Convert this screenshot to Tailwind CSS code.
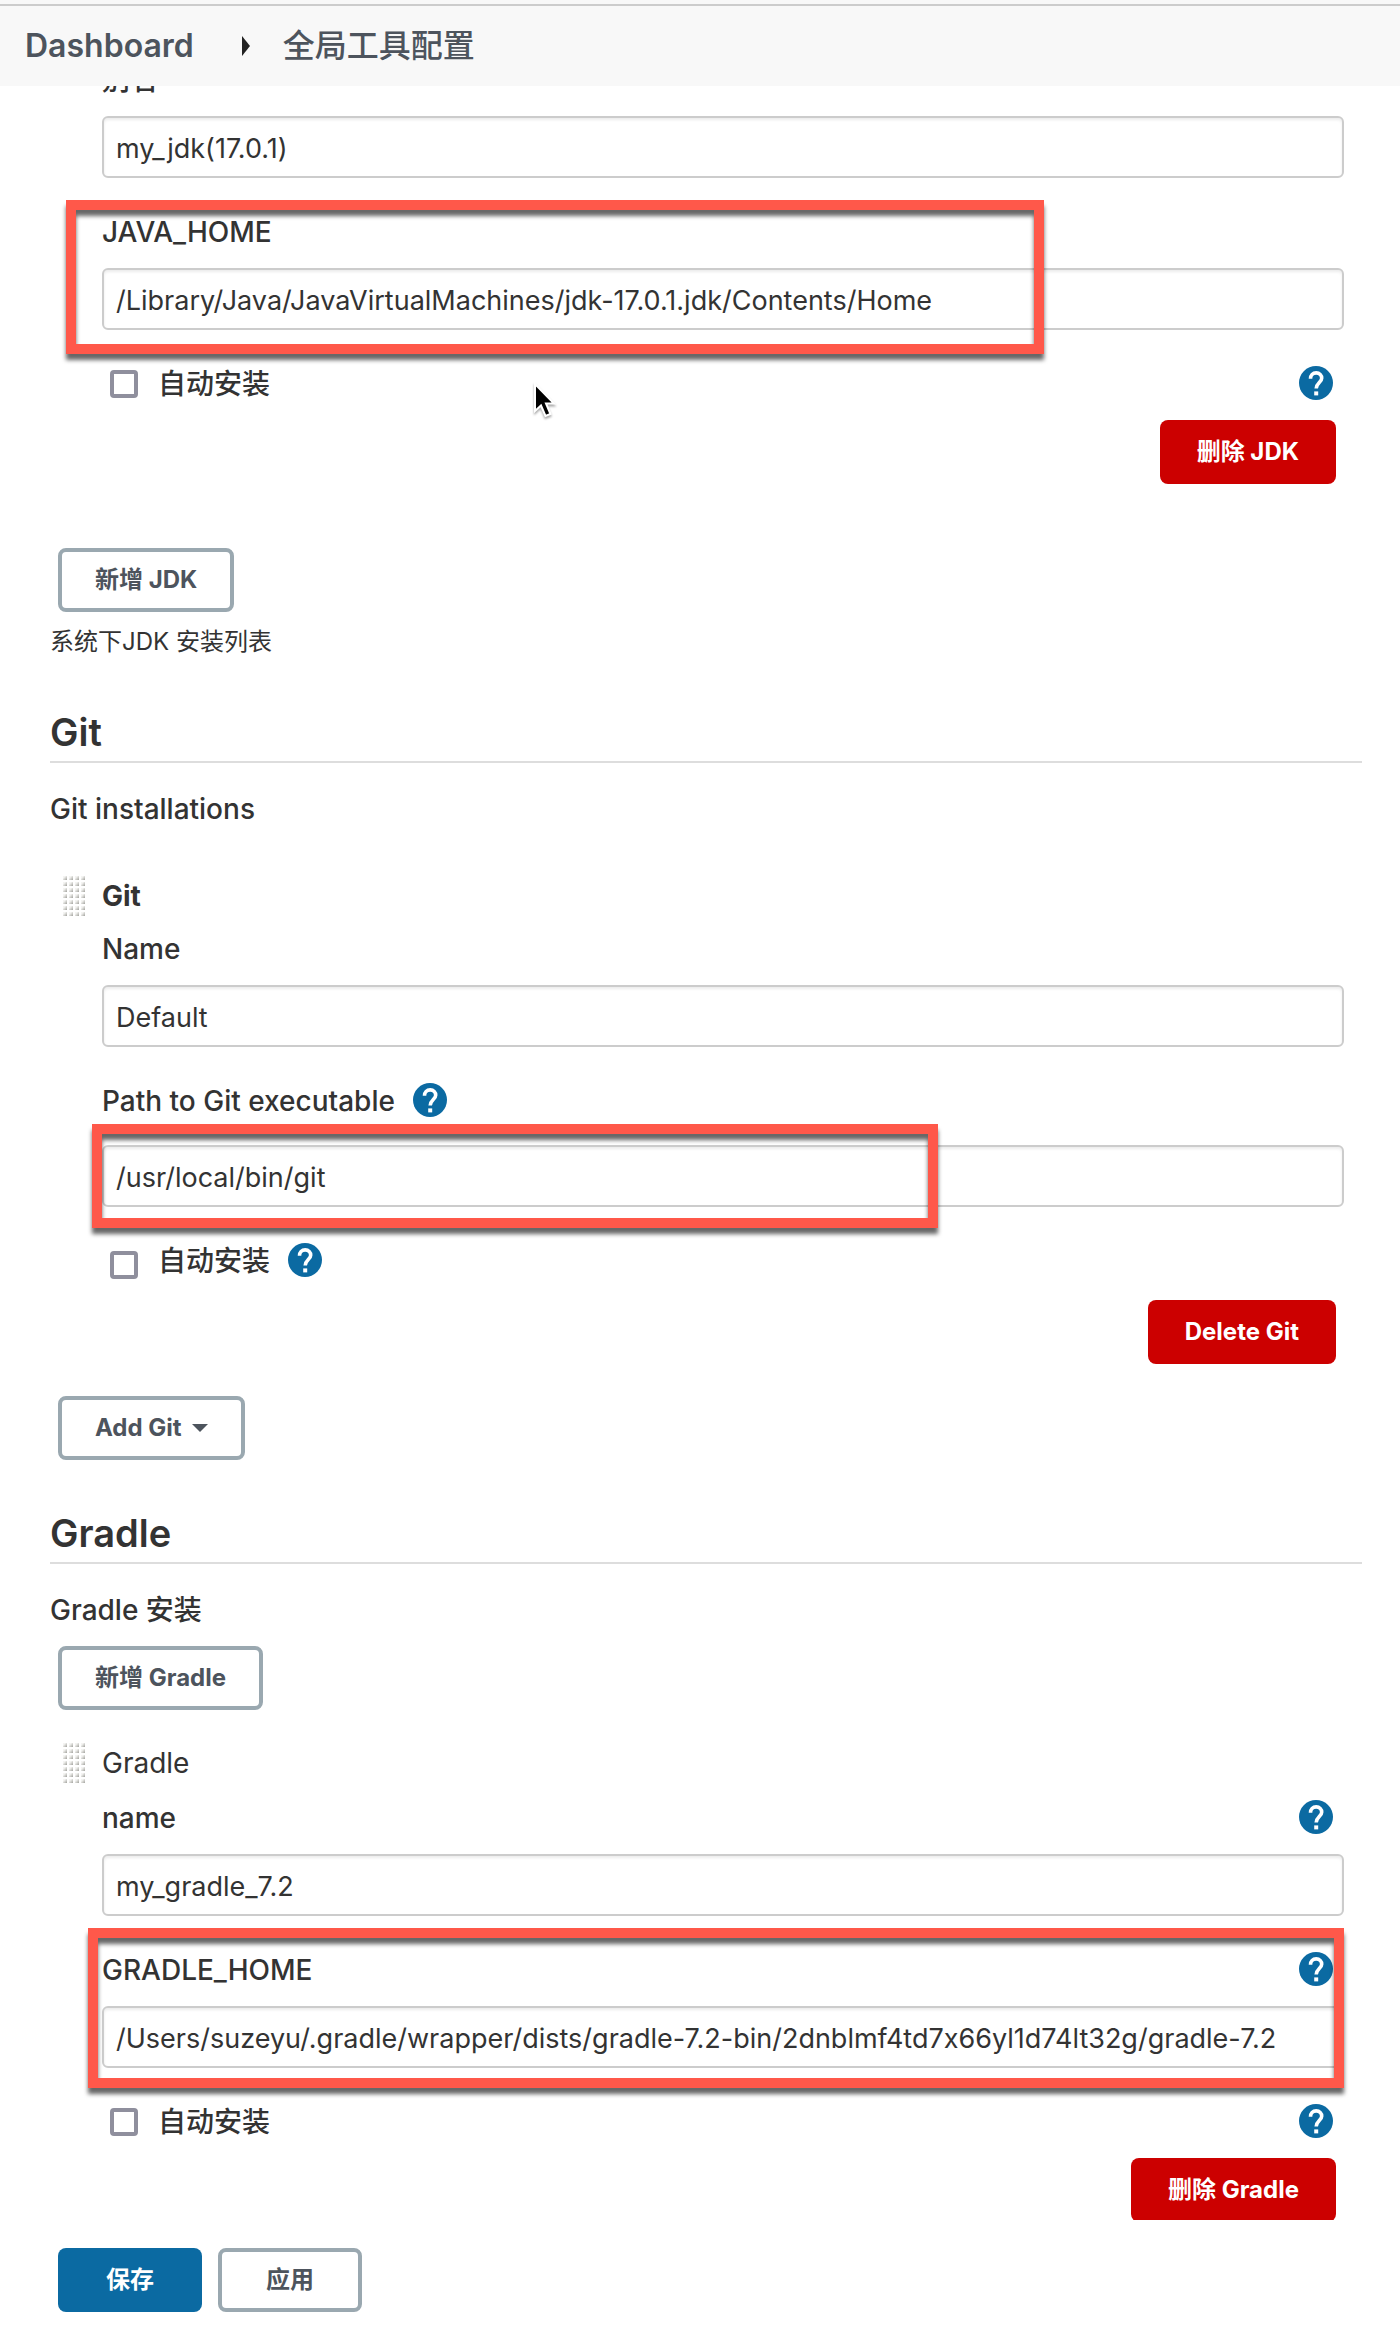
<!DOCTYPE html>
<html lang="zh-CN">
<head>
<meta charset="utf-8">
<title>全局工具配置</title>
<script src="https://cdn.jsdelivr.net/npm/@tailwindcss/browser@4"></script>
</head>
<body class="bg-white text-[28px] leading-9 text-[#333333] font-['Inter','Noto_Sans_CJK_SC',sans-serif] [font-feature-settings:'calt'_0]">

<svg class="absolute size-0" aria-hidden="true">
  <symbol id="help" viewBox="0 0 34 34">
    <circle cx="17" cy="17" r="17" fill="#0b6aa2"/>
    <path d="M11.500 12.700C11.500 9.200 13.800 6.900 17.200 6.900C20.600 6.900 22.700 9.200 22.700 12.200C22.700 16.200 17.200 17 17.200 22.500" fill="none" stroke="#fff" stroke-width="3.600"/>
    <path d="M15.200 25.400h4v4h-4z" fill="#fff"/>
  </symbol>
  <linearGradient id="dot" x1="0" y1="0" x2="1" y2="1">
    <stop offset="0.3" stop-color="#f4f4f2"/><stop offset="1" stop-color="#a0a09b"/>
  </linearGradient>
  <pattern id="dots" width="6" height="6" patternUnits="userSpaceOnUse">
    <rect x="1" y="1" width="4" height="4" fill="url(#dot)"/>
  </pattern>
  <symbol id="grip" viewBox="0 0 24 42"><rect width="24" height="42" fill="url(#dots)"/></symbol>
</svg>

<header class="sticky top-0 z-20 bg-[#f8f8f8] pt-1">
  <nav aria-label="breadcrumb" class="flex h-[82px] items-center border-t-2 border-[#cccccc] pl-[25px] text-[32px] text-[#4d545d]">
    <a href="#" class="font-semibold">Dashboard</a>
    <svg class="ml-12 h-5 w-2" viewBox="0 0 8 20" aria-hidden="true"><path d="M0 0L8 10L0 20Z" fill="#222"/></svg>
    <a href="#" class="ml-[33px] font-medium">全局工具配置</a>
  </nav>
</header>

<form>
<main class="-mt-6 pr-[38px] pl-[50px]">

  <section class="relative">
    <div class="mr-[18px] ml-[52px]">
      <div class="flex flex-col gap-[18px]">
        <label for="jdk-name" class="font-medium">别名</label>
        <input id="jdk-name" type="text" value="my_jdk(17.0.1)" class="h-[62px] w-full rounded-md border-2 border-[#cccccc] px-3 pt-0.5 text-[27px] shadow-[inset_0_2px_3px_rgba(0,0,0,0.08)]">
      </div>
      <div class="relative mt-9 flex flex-col gap-[18px]">
        <label for="java-home" class="font-medium">JAVA_HOME</label>
        <input id="java-home" type="text" value="/Library/Java/JavaVirtualMachines/jdk-17.0.1.jdk/Contents/Home" class="h-[62px] w-full rounded-md border-2 border-[#cccccc] px-3 pt-0.5 text-[27px] shadow-[inset_0_2px_3px_rgba(0,0,0,0.08)]">
        <div class="pointer-events-none absolute -top-3.5 -bottom-6 -left-9 w-[978px] border-10 border-[#ff584a] drop-shadow-[0_6px_2px_rgba(0,0,0,0.6)]"></div>
      </div>
      <div class="mt-9 flex items-center">
        <input id="jdk-auto" type="checkbox" class="ml-2 size-7 appearance-none rounded-sm border-4 border-[#8f8f9d]">
        <label for="jdk-auto" class="ml-5 font-medium">自动安装</label>
        <button type="button" aria-label="帮助" class="mr-[11px] ml-auto self-start"><svg class="size-[34px]"><use href="#help"/></svg></button>
      </div>
      <div class="mt-[18px] mr-2 flex justify-end">
        <button type="button" class="h-16 rounded-lg bg-[#cc0000] px-[37px] text-2xl font-bold text-white">删除 JDK</button>
      </div>
    </div>
    <button type="button" class="mt-16 ml-2 block h-16 rounded-lg border-4 border-[#9aa8b0] px-[33px] text-2xl font-bold text-[#4d545d]">新增 JDK</button>
    <p class="mt-3 text-2xl leading-9">系统下JDK 安装列表</p>
    <svg class="pointer-events-none absolute top-80 left-[483px] h-10 w-7 drop-shadow-[0_2px_1px_rgba(0,0,0,0.35)]" viewBox="0 0 28 40" aria-hidden="true">
      <path d="M2 2V29L8 23.500L12.500 34L17.500 32L13 21.500H21Z" fill="#000" stroke="#fff" stroke-width="2"/>
    </svg>
  </section>

  <section class="mt-12">
    <h2 class="border-b-2 border-[#dddddd] pb-[5px] text-[38px] leading-12 font-semibold">Git</h2>
    <p class="mt-7 font-medium">Git installations</p>
    <div class="mt-12 flex items-center">
      <svg class="ml-3 h-[42px] w-6" aria-hidden="true"><use href="#grip"/></svg>
      <b class="ml-4 font-bold">Git</b>
    </div>
    <div class="mt-3.5 mr-[18px] ml-[52px]">
      <div class="flex flex-col gap-[18px]">
        <label for="git-name" class="font-medium">Name</label>
        <input id="git-name" type="text" value="Default" class="h-[62px] w-full rounded-md border-2 border-[#cccccc] px-3 pt-0.5 text-[27px] shadow-[inset_0_2px_3px_rgba(0,0,0,0.08)]">
      </div>
      <div class="mt-9 flex items-center">
        <label for="git-path" class="font-medium">Path to Git executable</label>
        <button type="button" aria-label="帮助" class="ml-[18px] self-start"><svg class="size-[34px]"><use href="#help"/></svg></button>
      </div>
      <div class="relative mt-[26px]">
        <input id="git-path" type="text" value="/usr/local/bin/git" class="block h-[62px] w-full rounded-md border-2 border-[#cccccc] px-3 pt-0.5 text-[27px] shadow-[inset_0_2px_3px_rgba(0,0,0,0.08)]">
        <div class="pointer-events-none absolute -inset-y-[21px] -left-2.5 w-[846px] border-10 border-[#ff584a] drop-shadow-[0_6px_2px_rgba(0,0,0,0.6)]"></div>
      </div>
      <div class="mt-9 flex items-center">
        <input id="git-auto" type="checkbox" class="ml-2 size-7 self-end appearance-none rounded-sm border-4 border-[#8f8f9d]">
        <label for="git-auto" class="ml-5 font-medium">自动安装</label>
        <button type="button" aria-label="帮助" class="ml-[18px] self-start"><svg class="size-[34px]"><use href="#help"/></svg></button>
      </div>
      <div class="mt-[21px] mr-2 flex justify-end">
        <button type="button" class="h-16 rounded-lg bg-[#cc0000] px-[37px] text-2xl font-bold text-white">Delete Git</button>
      </div>
    </div>
    <button type="button" class="mt-8 ml-2 flex h-16 items-center rounded-lg border-4 border-[#9aa8b0] px-[33px] text-2xl font-bold text-[#4d545d]">Add Git
      <svg class="ml-2.5 h-2 w-4" viewBox="0 0 16 8" aria-hidden="true"><path d="M0 0H16L8 8Z" fill="#4d545d"/></svg>
    </button>
  </section>

  <section class="mt-[49px]">
    <h2 class="border-b-2 border-[#dddddd] pb-[5px] text-[38px] leading-12 font-semibold">Gradle</h2>
    <p class="mt-7 font-medium">Gradle 安装</p>
    <button type="button" class="mt-[18px] ml-2 block h-16 rounded-lg border-4 border-[#9aa8b0] px-[33px] text-2xl font-bold text-[#4d545d]">新增 Gradle</button>
    <div class="mt-8 flex items-center">
      <svg class="ml-3 h-[42px] w-6" aria-hidden="true"><use href="#grip"/></svg>
      <span class="ml-4">Gradle</span>
    </div>
    <div class="mt-4 mr-[18px] ml-[52px]">
      <div class="flex items-center">
        <label for="gradle-name" class="font-medium">name</label>
        <button type="button" aria-label="帮助" class="mr-[11px] ml-auto self-start"><svg class="size-[34px]"><use href="#help"/></svg></button>
      </div>
      <input id="gradle-name" type="text" value="my_gradle_7.2" class="mt-[18px] block h-[62px] w-full rounded-md border-2 border-[#cccccc] px-3 pt-0.5 text-[27px] shadow-[inset_0_2px_3px_rgba(0,0,0,0.08)]">
      <div class="relative mt-9">
        <div class="flex items-center">
          <label for="gradle-home" class="font-medium">GRADLE_HOME</label>
          <button type="button" aria-label="帮助" class="mr-[11px] ml-auto self-start"><svg class="size-[34px]"><use href="#help"/></svg></button>
        </div>
        <input id="gradle-home" type="text" value="/Users/suzeyu/.gradle/wrapper/dists/gradle-7.2-bin/2dnblmf4td7x66yl1d74lt32g/gradle-7.2" class="mt-[18px] block h-[62px] w-full rounded-md border-2 border-[#cccccc] px-3 pt-0.5 text-[27px] shadow-[inset_0_2px_3px_rgba(0,0,0,0.08)]">
        <div class="pointer-events-none absolute -top-6 right-0 -bottom-5 -left-3.5 border-10 border-[#ff584a] drop-shadow-[0_6px_2px_rgba(0,0,0,0.6)]"></div>
      </div>
      <div class="mt-9 flex items-center">
        <input id="gradle-auto" type="checkbox" class="ml-2 size-7 appearance-none rounded-sm border-4 border-[#8f8f9d]">
        <label for="gradle-auto" class="ml-5 font-medium">自动安装</label>
        <button type="button" aria-label="帮助" class="mr-[11px] ml-auto self-start"><svg class="size-[34px]"><use href="#help"/></svg></button>
      </div>
      <div class="mt-[18px] mr-2 flex justify-end">
        <button type="button" class="h-16 rounded-lg bg-[#cc0000] px-[37px] text-2xl font-bold text-white">删除 Gradle</button>
      </div>
    </div>
  </section>
</main>

<footer class="sticky bottom-0 z-10 -mt-0.5 flex gap-4 bg-white pt-7 pb-6 pl-[58px]">
  <button type="submit" class="h-16 w-36 rounded-lg bg-[#0b6aa2] text-2xl font-bold text-white">保存</button>
  <button type="button" class="h-16 w-36 rounded-lg border-4 border-[#9aa8b0] text-2xl font-bold text-[#4d545d]">应用</button>
</footer>
</form>
</body>
</html>
